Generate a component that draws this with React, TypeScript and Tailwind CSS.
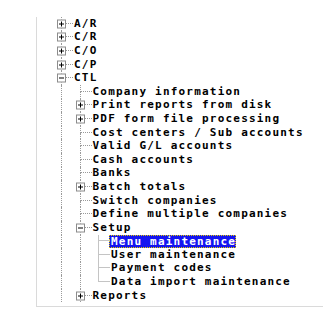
import React from 'react';

type Node = {
  label: string;
  // one flag per ancestor column: true when a vertical guide runs through it
  guides: boolean[];
  last?: boolean;
  toggle?: '+' | '-';
  selected?: boolean;
  soft?: boolean; // lighter solid lines under Setup
};

const L0: boolean[] = [];
const L1 = [true];
const L2 = [true, true];

const rows: Node[] = [
  { label: 'A/R', guides: L0, toggle: '+' },
  { label: 'C/R', guides: L0, toggle: '+' },
  { label: 'C/O', guides: L0, toggle: '+' },
  { label: 'C/P', guides: L0, toggle: '+' },
  { label: 'CTL', guides: L0, toggle: '-' },
  { label: 'Company information', guides: L1 },
  { label: 'Print reports from disk', guides: L1, toggle: '+' },
  { label: 'PDF form file processing', guides: L1, toggle: '+' },
  { label: 'Cost centers / Sub accounts', guides: L1 },
  { label: 'Valid G/L accounts', guides: L1 },
  { label: 'Cash accounts', guides: L1 },
  { label: 'Banks', guides: L1 },
  { label: 'Batch totals', guides: L1, toggle: '+' },
  { label: 'Switch companies', guides: L1 },
  { label: 'Define multiple companies', guides: L1 },
  { label: 'Setup', guides: L1, toggle: '-' },
  { label: 'Menu maintenance', guides: L2, selected: true, soft: true },
  { label: 'User maintenance', guides: L2, soft: true },
  { label: 'Payment codes', guides: L2, soft: true },
  { label: 'Data import maintenance', guides: L2, soft: true, last: true },
  { label: 'Reports', guides: L1, toggle: '+' },
];

const Toggle: React.FC<{ kind: '+' | '-' }> = ({ kind }) => (
  <div className="absolute left-[5px] top-1/2 -translate-y-1/2 w-[9px] h-[9px] border border-[#8c8c8c] bg-white flex items-center justify-center">
    <svg width="7" height="7" viewBox="0 0 7 7">
      <rect x="1" y="3" width="5" height="1" fill="#000" />
      {kind === '+' && <rect x="3" y="1" width="1" height="5" fill="#000" />}
    </svg>
  </div>
);

const TreeRow: React.FC<{ node: Node }> = ({ node }) => {
  const color = node.soft ? 'border-solid border-[#c4c4c4]' : 'border-dotted border-[#9a9a9a]';
  return (
    <div className="flex h-[13.6px] items-stretch">
      {node.guides.map((g, i) => (
        <div key={i} className="w-[18.5px] shrink-0 flex">
          {g && <div className="ml-[9px] border-l border-dotted border-[#9a9a9a]" />}
        </div>
      ))}
      <div className="w-[21px] shrink-0 flex flex-col relative">
        <div className={`h-1/2 ml-[9px] border-l border-b ${color}`} />
        {!node.last && <div className={`flex-1 ml-[9px] border-l ${color}`} />}
        {node.toggle && <Toggle kind={node.toggle} />}
      </div>
      <div className="flex items-center">
        <span
          className={
            node.selected
              ? '-ml-[1px] pl-[2px] leading-[13px] bg-[#1414f0] text-white outline-1 outline-dotted outline-[#e8d000] -outline-offset-1'
              : 'pl-[1px] leading-[12px] text-black'
          }
        >
          {node.label}
        </span>
      </div>
    </div>
  );
};

const App: React.FC = () => {
  return (
    <div className="w-[323px] h-[320px] bg-white overflow-hidden">
      <div
        className="ml-[36px] mt-[17px] h-[290px] border-l border-b border-[#dadada] pl-[15px] text-[11px] font-bold tracking-[1.2px] whitespace-nowrap"
        style={{ fontFamily: '"DejaVu Sans Mono", "Liberation Mono", monospace' }}
      >
        {rows.map((r) => (
          <TreeRow key={r.label} node={r} />
        ))}
      </div>
    </div>
  );
};

export default App;
